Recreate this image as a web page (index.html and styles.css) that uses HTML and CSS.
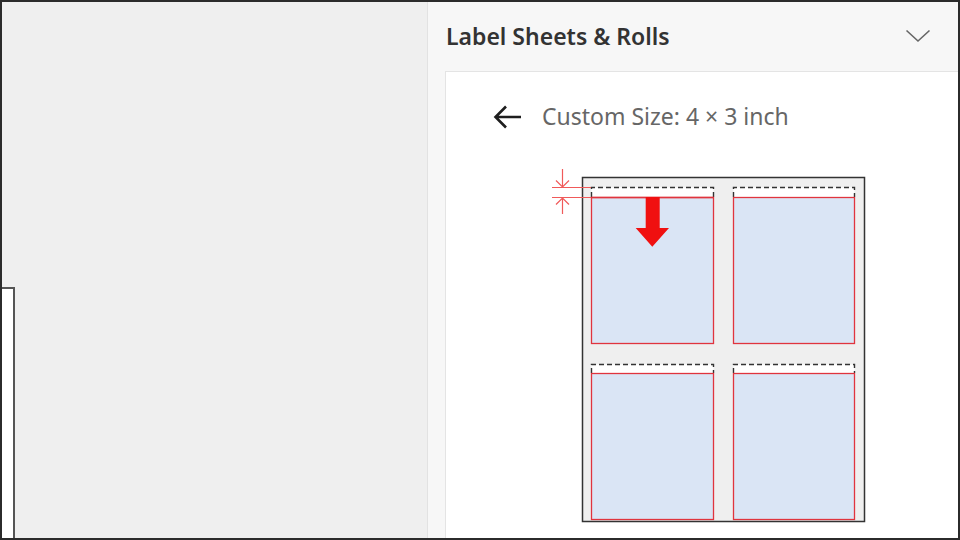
FILE: index.html
```html
<!DOCTYPE html>
<html>
<head>
<meta charset="utf-8">
<link rel="stylesheet" href="styles.css">
</head>
<body>
<div class="frame">
  <div class="canvas">
    <div class="page-edge"></div>
  </div>
  <div class="panel">
    <div class="panel-header">
      <span class="panel-title">Label Sheets &amp; Rolls</span>
      <svg class="chevron" width="26" height="14" viewBox="0 0 26 14"><path d="M1.5 1.5 L13 12 L24.5 1.5" fill="none" stroke="#666" stroke-width="1.6"/></svg>
    </div>
    <div class="card">
      <div class="back-row">
        <svg class="back-arrow" width="30" height="26" viewBox="0 0 30 26"><path d="M28 13 H3 M13 2.5 L2.5 13 L13 23.5" fill="none" stroke="#1e1e1e" stroke-width="2.6"/></svg>
        <span class="back-text">Custom Size: 4 × 3 inch</span>
      </div>
      <svg class="sheet" width="320" height="362" viewBox="0 0 320 362">
        <rect x="33.5" y="12.5" width="282" height="344" fill="#efefef" stroke="#333" stroke-width="1.5"/>
        <!-- dashed header boxes -->
        <rect x="42.5" y="22.5" width="122" height="10" fill="#fff"/>
        <rect x="184.5" y="22.5" width="121" height="10" fill="#fff"/>
        <rect x="42.5" y="199.5" width="122" height="9" fill="#fff"/>
        <rect x="184.5" y="199.5" width="121" height="9" fill="#fff"/>
        <g fill="none" stroke="#333" stroke-width="1.4" stroke-dasharray="5 3">
          <path d="M42.5 32 V22.5 H164.5 V32"/>
          <path d="M184.5 32 V22.5 H305.5 V32"/>
          <path d="M42.5 208 V199.5 H164.5 V208"/>
          <path d="M184.5 208 V199.5 H305.5 V208"/>
        </g>
        <!-- labels -->
        <g fill="#dae5f5" stroke="#e0343e" stroke-width="1.3">
          <rect x="42.5" y="32.5" width="122" height="146"/>
          <rect x="184.5" y="32.5" width="121" height="146"/>
          <rect x="42.5" y="208.5" width="122" height="146"/>
          <rect x="184.5" y="208.5" width="121" height="146"/>
        </g>
        <!-- measurement -->
        <g fill="none" stroke="#f05a5a" stroke-width="1.2">
          <path d="M3 22.5 H42"/>
          <path d="M3 32.5 H42"/>
          <path d="M13.5 4 V22 M7 15.5 L13.5 22 L20 15.5"/>
          <path d="M13.5 33 V49 M7 39.5 L13.5 33 L20 39.5"/>
        </g>
        <path d="M42.5 32.5 H164.5" stroke="#e0343e" stroke-width="1.5"/>
        <!-- big arrow -->
        <path d="M96.7 32 H110.7 V63 H120 L103.3 81.7 L86.7 63 H96.7 Z" fill="#f01010"/>
      </svg>
    </div>
  </div>
</div>
</body>
</html>
```
FILE: styles.css
```css
html, body {
  margin: 0;
  padding: 0;
}
body {
  width: 960px;
  height: 540px;
  overflow: hidden;
  font-family: "Noto Sans", "Open Sans", sans-serif;
}
.frame {
  box-sizing: border-box;
  width: 960px;
  height: 540px;
  border: 2px solid #2b2b2b;
  display: flex;
  background: #efefef;
}
.canvas {
  width: 425px;
  flex: none;
  background: #efefef;
  border-right: 1px solid #e2e2e2;
  display: flex;
  flex-direction: column;
  justify-content: flex-end;
}
.page-edge {
  box-sizing: border-box;
  width: 13px;
  height: 251px;
  background: #fff;
  border-top: 2px solid #555;
  border-right: 2px solid #555;
}
.panel {
  flex: 1;
  background: #f7f7f7;
  display: flex;
  flex-direction: column;
  min-width: 0;
}
.panel-header {
  height: 69px;
  flex: none;
  display: flex;
  align-items: center;
  justify-content: space-between;
  padding: 0 27px 0 18px;
}
.panel-title {
  font-size: 23px;
  font-weight: 600;
  color: #333;
  letter-spacing: 0;
  position: relative;
  top: -1px;
}
.chevron {
  display: block;
  position: relative;
  top: -1px;
}
.card {
  flex: 1;
  margin-left: 17px;
  background: #fff;
  border-top: 1px solid #e4e4e4;
  border-left: 1px solid #e4e4e4;
  display: flex;
  flex-direction: column;
}
.back-row {
  display: flex;
  align-items: center;
  height: 26px;
  margin-top: 32px;
  padding-left: 47px;
}
.back-arrow {
  display: block;
}
.back-text {
  margin-left: 19px;
  font-size: 23px;
  color: #666;
  letter-spacing: 0;
  position: relative;
  top: -1px;
}
.sheet {
  display: block;
  margin-top: 35px;
  margin-left: 103px;
}
```
